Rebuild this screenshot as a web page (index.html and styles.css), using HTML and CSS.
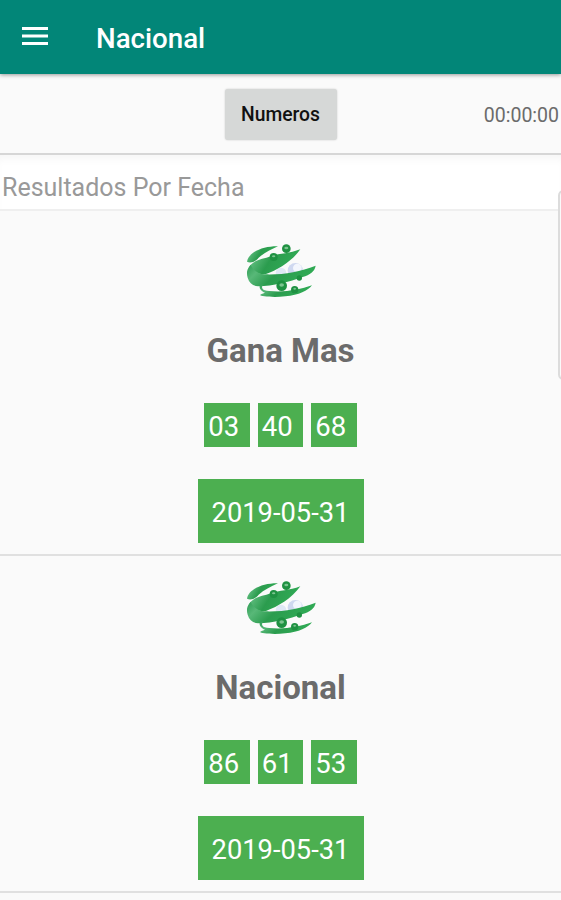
FILE: index.html
```html
<!DOCTYPE html>
<html lang="es">
  <head>
    <meta charset="utf-8">
    <title>Nacional</title>
    <link rel="stylesheet" href="styles.css">
  </head>

  <body>
    <svg class="defs" width="0" height="0">
      <defs>
        <linearGradient id="verde" x1="0" y1="0" x2="1" y2="0.3">
          <stop offset="0" stop-color="#2f9d55" />
          <stop offset="0.22" stop-color="#58b878" />
          <stop offset="0.5" stop-color="#2b9c4e" />
          <stop offset="1" stop-color="#30ab55" />
        </linearGradient>
        <symbol id="logo" viewBox="0 0 270 210">
          <circle cx="178" cy="107" r="23" fill="#cfd8f0" />
          <circle cx="184" cy="99" r="13" fill="#f3f6fd" />
          <circle cx="135" cy="114" r="16" fill="#dfe8f5" />
          <g fill="url(#verde)">
            <path d="M126 34C84 33 38 50 33 80C44 86 58 80 68 68C84 54 104 44 126 34Z" />
            <path d="M193 43C160 56 130 55 104 64C84 72 62 72 46 88C34 98 36 108 50 112C64 117 78 118 90 117C126 104 168 79 193 43Z" />
            <path d="M44 90C30 104 32 118 35 128C40 144 50 153 66 154C112 153 160 140 200 126C222 119 236 110 239 92C190 110 141 120 87 118C66 117 52 106 44 90Z" />
            <path d="M82 148C74 158 78 168 100 168C146 173 190 164 228 151C216 167 189 181 148 184C112 188 73 184 72 180C78 176 85 174 88 174C74 168 68 158 72 150Z" />
          </g>
          <g class="bolas">
            <circle cx="151" cy="41" r="13" />
            <circle cx="113" cy="66" r="12" />
            <circle cx="137" cy="152" r="16" />
            <circle cx="190" cy="129" r="8" />
            <circle cx="176" cy="164" r="11" />
          </g>
          <g fill="#7cc490">
            <ellipse cx="151" cy="39" rx="6" ry="4" />
            <ellipse cx="113" cy="64" rx="5" ry="3" />
            <ellipse cx="137" cy="150" rx="7" ry="5" />
            <ellipse cx="176" cy="161" rx="4" ry="3" />
          </g>
        </symbol>
      </defs>
    </svg>

    <header class="barra">
      <svg class="menu" viewBox="0 0 26 19">
        <path d="M0 1.5H26M0 9H26M0 16.5H26" />
      </svg>
      <h1>Nacional</h1>
    </header>

    <div class="controles">
      <button class="numeros">Numeros</button>
      <span class="reloj">00:00:00</span>
    </div>

    <div class="fecha-titulo">Resultados Por Fecha</div>

    <main class="resultados">
      <section class="sorteo">
        <svg class="logo"><use href="#logo" /></svg>
        <h2>Gana Mas</h2>
        <div class="bolos">
          <span>03</span>
          <span>40</span>
          <span>68</span>
        </div>
        <div class="fecha">2019-05-31</div>
      </section>

      <section class="sorteo">
        <svg class="logo"><use href="#logo" /></svg>
        <h2>Nacional</h2>
        <div class="bolos">
          <span>86</span>
          <span>61</span>
          <span>53</span>
        </div>
        <div class="fecha">2019-05-31</div>
      </section>
    </main>

    <div class="pestana"></div>
  </body>
</html>
```
FILE: styles.css
```css
* {
  margin: 0;
  padding: 0;
  box-sizing: border-box;
}

body {
  position: relative;
  height: 900px;
  overflow: hidden;
  background: #fafafa;
  color: #6b6b6b;
  font-family: Roboto, sans-serif;
}

.defs {
  display: block;
}

.barra {
  position: relative;
  display: flex;
  align-items: center;
  height: 74px;
  padding-left: 22px;
  background: #028678;
  box-shadow: 0 1px 4px rgba(0, 0, 0, 0.4);
}

.menu {
  width: 26px;
  height: 19px;
  margin-right: 48px;
  margin-top: -2px;
}

.menu path {
  stroke: #fff;
  stroke-width: 3;
}

.barra h1 {
  padding-top: 2px;
  color: #fff;
  font-size: 27.7px;
  font-weight: 500;
}

.controles {
  display: grid;
  grid-template-columns: 1fr 112px 1fr;
  align-items: center;
  height: 81px;
  padding-top: 1px;
  border-bottom: 2px solid #d6d6d6;
}

.numeros {
  grid-column: 2;
  height: 51px;
  padding-top: 1px;
  border: 0;
  border-radius: 3px;
  background: #d6d8d7;
  box-shadow: 0 0 2px rgba(0, 0, 0, 0.2);
  color: #111;
  font: 500 19.3px Roboto, sans-serif;
}

.reloj {
  padding-top: 2px;
  padding-right: 2px;
  font-size: 19.5px;
  text-align: right;
}

.fecha-titulo {
  height: 56px;
  padding-left: 2px;
  border-bottom: 2px solid #efefef;
  background: #fff;
  box-shadow: inset 0 8px 8px -4px #f6f6f6;
  color: #999;
  font-size: 25px;
  line-height: 65px;
}

.resultados {
  padding-top: 8px;
}

.sorteo {
  display: flex;
  flex-direction: column;
  align-items: center;
  height: 337px;
  padding-top: 16px;
  border-bottom: 2px solid #e0e0e0;
}

.logo {
  width: 90px;
  height: 70px;
}

.bolas {
  fill: #1f9142;
}

.sorteo h2 {
  height: 40px;
  margin-top: 26px;
  font-size: 33px;
  font-weight: 700;
  line-height: 40px;
}

.bolos {
  display: flex;
  gap: 8px;
  margin-top: 32px;
}

.bolos span {
  width: 45.5px;
  height: 44px;
  padding-left: 4px;
  background: #4caf50;
  color: #fff;
  font-size: 27.5px;
  line-height: 47px;
}

.fecha {
  width: 166px;
  height: 64px;
  margin-top: 32px;
  background: #4caf50;
  color: #fff;
  font-size: 27.3px;
  line-height: 68px;
  text-align: center;
}

/* borde de la pestaña lateral */
.pestana {
  position: absolute;
  top: 190px;
  right: -8px;
  width: 11px;
  height: 190px;
  border: 2px solid #dcdcdc;
  border-radius: 6px;
  background: #fafafa;
}
```
